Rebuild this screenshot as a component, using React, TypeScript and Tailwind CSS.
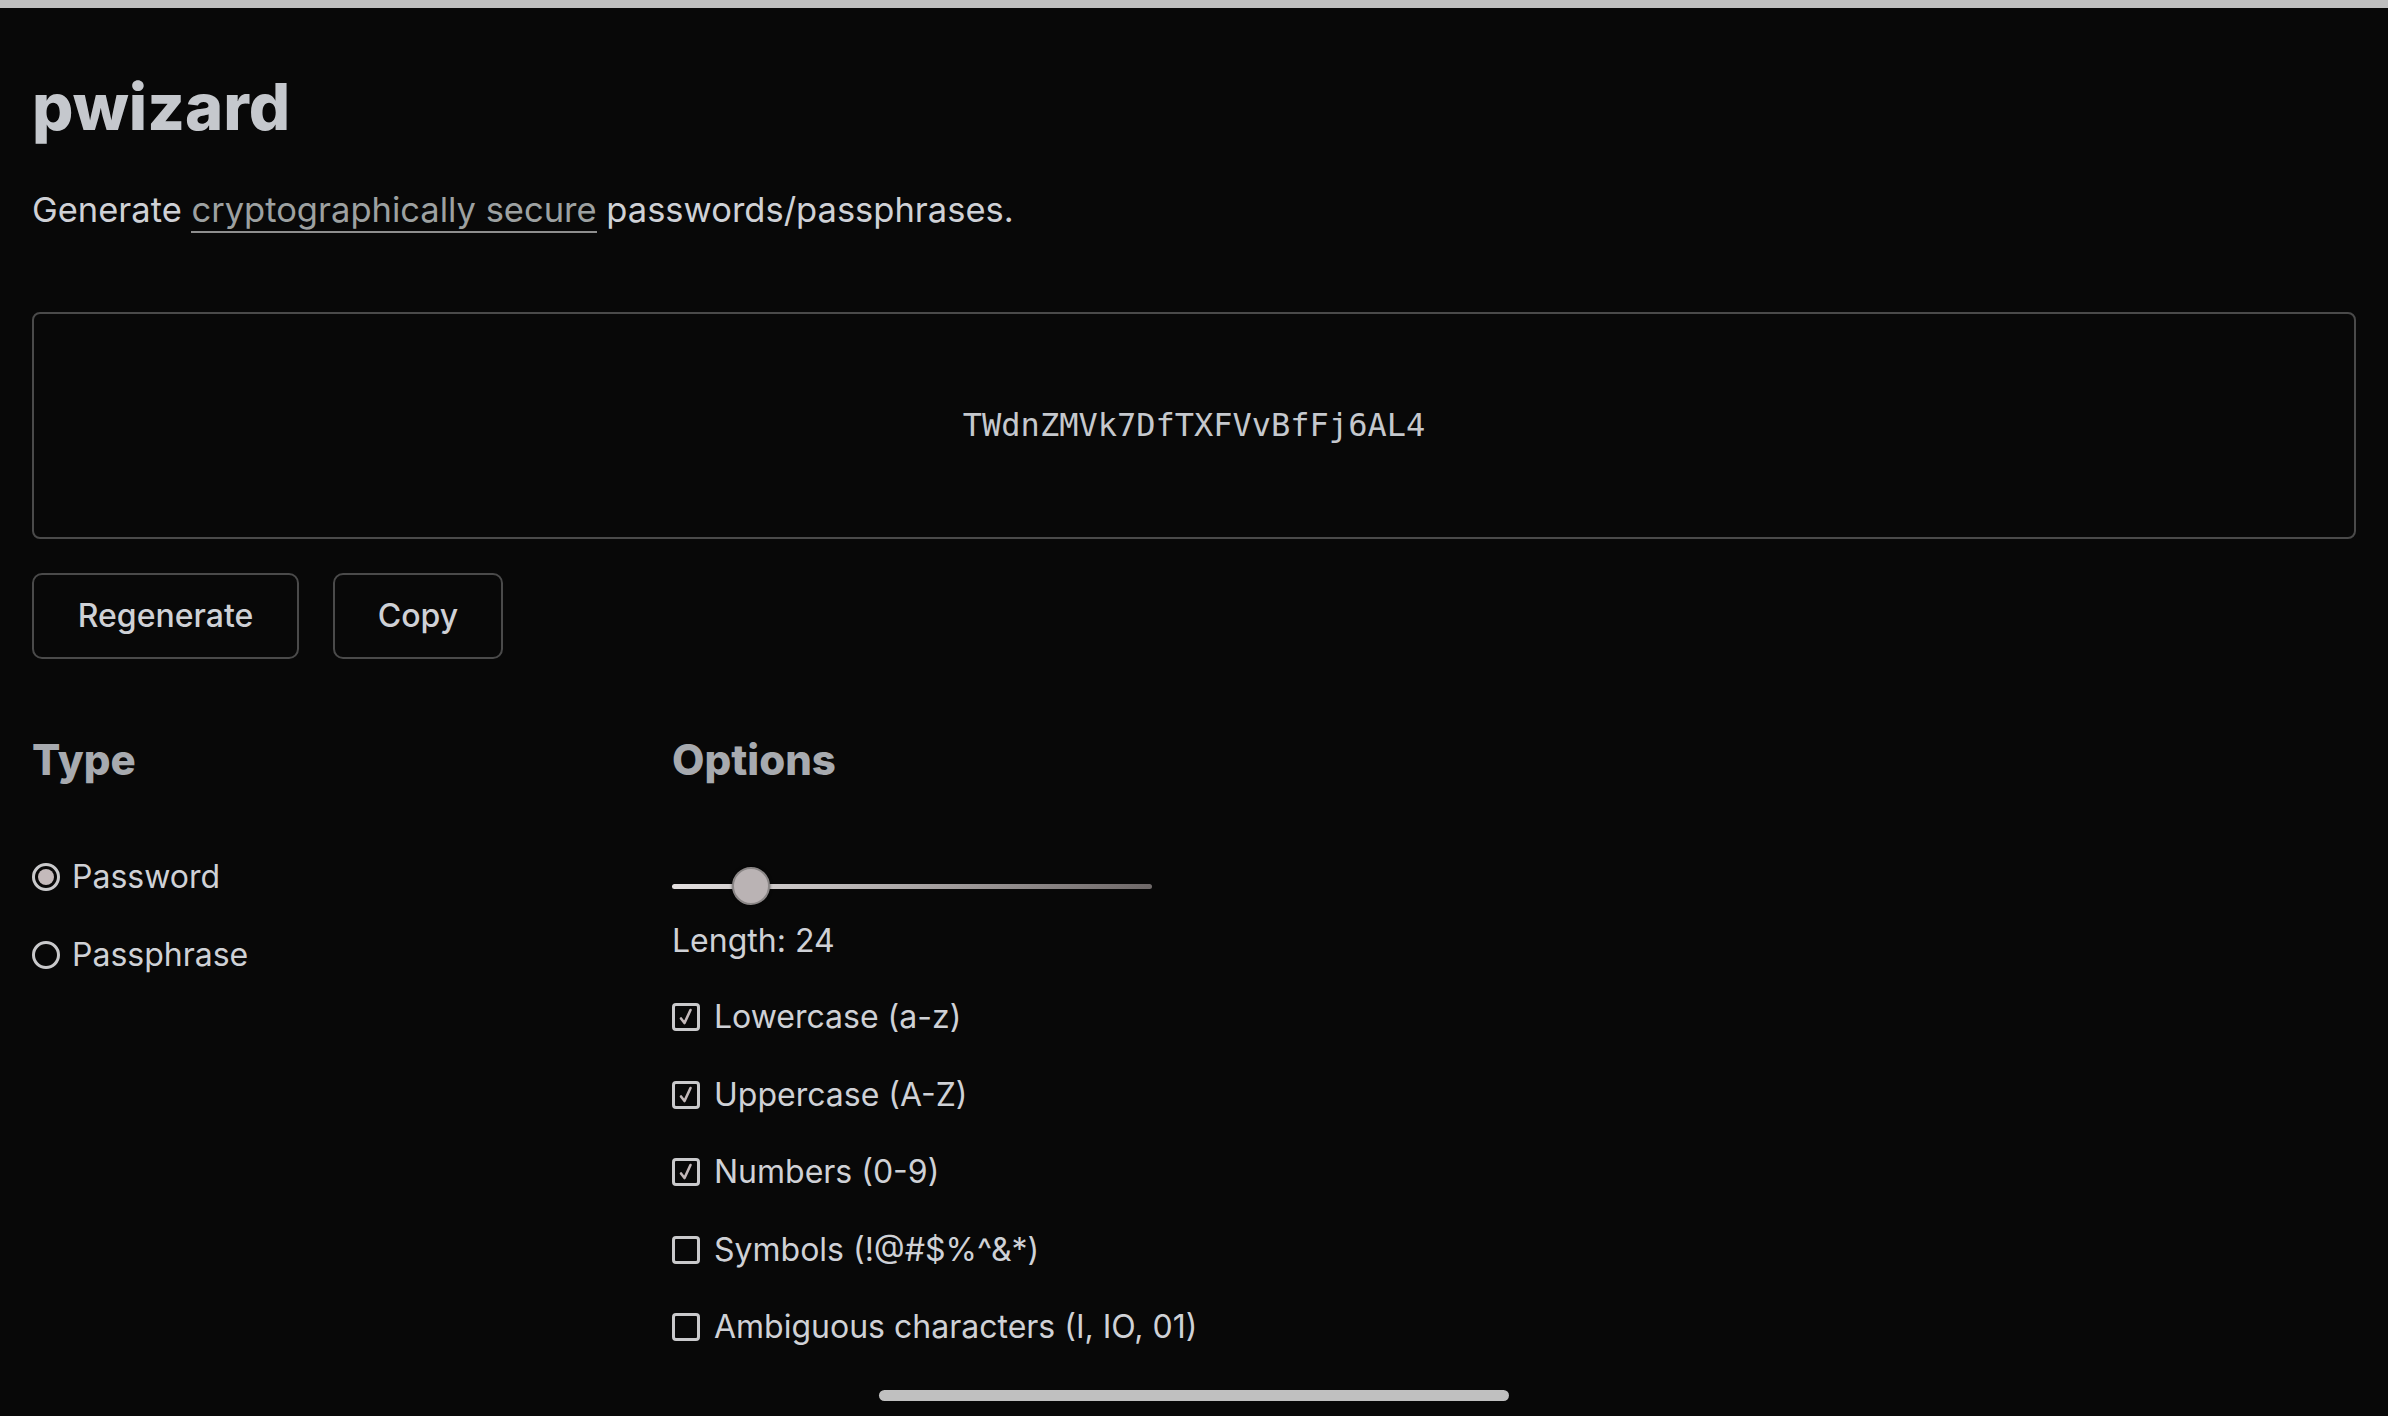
import React from "react";

function Radio({ checked, label }: { checked: boolean; label: string }) {
  return (
    <div className="flex items-center h-[40px] gap-[12px]">
      <div className="w-[28px] h-[28px] rounded-full border-[3px] border-[#c9c9cb] flex items-center justify-center shrink-0">
        {checked && <div className="w-[16px] h-[16px] rounded-full bg-[#c4babb]" />}
      </div>
      <span className="text-[32px] leading-[40px] text-[#cfd1d6]">{label}</span>
    </div>
  );
}

function Check({ checked, label }: { checked: boolean; label: string }) {
  return (
    <div className="flex items-center h-[40px] gap-[14px]">
      <div className="w-[28px] h-[28px] rounded-[4px] border-[3px] border-[#c9c9cb] flex items-center justify-center shrink-0">
        {checked && (
          <svg width="18" height="20" viewBox="0 0 18 20" fill="none">
            <path d="M4 11.5 L7.5 16 L13.5 3" stroke="#c3b8b9" strokeWidth="2.6" strokeLinecap="round" strokeLinejoin="round" />
          </svg>
        )}
      </div>
      <span className="text-[32px] leading-[40px] text-[#cfd1d6]">{label}</span>
    </div>
  );
}

export default function App() {
  return (
    <div className="relative h-[1416px] overflow-hidden bg-[#080808] font-['Inter',sans-serif]">
      <div className="h-[8px] bg-[#bfbfbf]" />
      <div className="pl-[32px] pr-[32px]">
        <h1 className="mt-[67px] text-[65px] leading-[64px] font-extrabold text-[#c5c8cd]">pwizard</h1>
        <p className="mt-[51px] text-[34.5px] leading-[40px] text-[#cfd1d6]">
          Generate{" "}
          <span className="text-[#9da1a1] border-b-2 border-[#8e8e8e] pb-[1px]">cryptographically secure</span>{" "}
          passwords/passphrases.
        </p>
        <div className="mt-[82px] h-[227px] rounded-[8px] border-2 border-[#4a4a4a] flex items-center justify-center">
          <span className="font-['DejaVu_Sans_Mono',monospace] text-[32px] leading-[40px] text-[#c5c8cd] -translate-y-[1px]">
            TWdnZMVk7DfTXFVvBfFj6AL4
          </span>
        </div>
        <div className="mt-[34px] flex gap-[34px]">
          <button className="h-[86px] w-[267px] rounded-[10px] border-2 border-[#4a4a4a] text-[32px] font-medium text-[#cfd1d6]">
            Regenerate
          </button>
          <button className="h-[86px] w-[170px] rounded-[10px] border-2 border-[#4a4a4a] text-[32px] font-medium text-[#cfd1d6]">
            Copy
          </button>
        </div>
        <div className="mt-[77px] grid grid-cols-[640px_1fr]">
          <div>
            <h2 className="text-[42px] leading-[48px] font-extrabold text-[#a7aaaf]">Type</h2>
            <div className="mt-[73px] flex flex-col gap-[38px]">
              <Radio checked label="Password" />
              <Radio checked={false} label="Passphrase" />
            </div>
          </div>
          <div>
            <h2 className="text-[42px] leading-[48px] font-extrabold text-[#a7aaaf]">Options</h2>
            <div className="mt-[83px] relative w-[480px] h-[38px] flex items-center">
              <div className="w-full h-[5px] rounded-full bg-[linear-gradient(to_right,#e4e0e0,#c9c5c5_25%,#6e6868)]" />
              <div className="absolute left-[60px] top-0 w-[38px] h-[38px] rounded-full bg-[#bab3b4] border-2 border-[#8a8686] shadow-[0_0_3px_rgba(0,0,0,0.6)]" />
            </div>
            <div className="mt-[16px] text-[32px] leading-[40px] text-[#cfd1d6]">Length: 24</div>
            <div className="mt-[36px] flex flex-col gap-[37.5px]">
              <Check checked label="Lowercase (a-z)" />
              <Check checked label="Uppercase (A-Z)" />
              <Check checked label="Numbers (0-9)" />
              <Check checked={false} label="Symbols (!@#$%^&*)" />
              <Check checked={false} label="Ambiguous characters (I, IO, 01)" />
            </div>
          </div>
        </div>
      </div>
      <div className="absolute bottom-[15px] left-[879px] w-[630px] h-[11px] rounded-full bg-[#c0c0c0]" />
    </div>
  );
}
